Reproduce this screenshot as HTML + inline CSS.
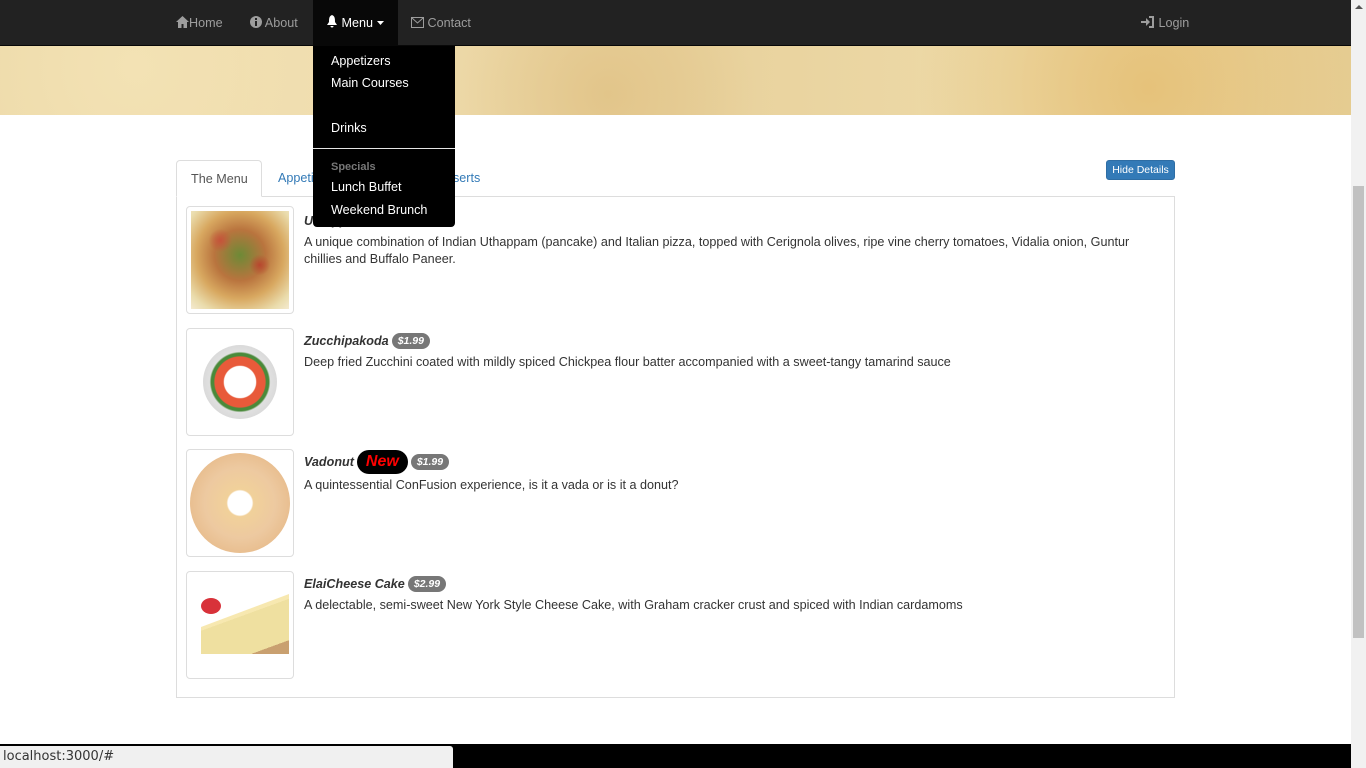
<!DOCTYPE html>
<html><head><meta charset="utf-8"><style>
*{box-sizing:border-box}
body{margin:0;width:1366px;height:768px;overflow:hidden;font-family:"Liberation Sans",Arial,sans-serif;font-size:13px;color:#333;background:#fff;position:relative}
.nav{position:absolute;left:0;top:0;width:1351px;height:46px;background:#222;border-bottom:1px solid #080808}
.nav a{position:absolute;top:1px;height:45px;line-height:45px;color:#9d9d9d;font-size:12.6px;text-decoration:none}
.jumbo{position:absolute;left:0;top:46px;width:1351px;height:69px;background:radial-gradient(circle at 10% 30%,#f3e2b4 0,transparent 25%),radial-gradient(circle at 45% 70%,#e2c58a 0,transparent 20%),radial-gradient(circle at 85% 60%,#e6c27a 0,transparent 20%),linear-gradient(90deg,#ead6a4,#efdcad,#e8d19c,#eddaa8,#e5cd94);}
.dd{position:absolute;left:313px;top:46px;width:142px;height:181px;background:#000;border-radius:0 0 4px 4px;color:#fff;font-size:12.6px}
.dd div{position:absolute;left:18px}
.scroll{position:absolute;left:1351px;top:0;width:15px;height:768px;background:#f1f1f1}
.thumb{position:absolute;left:1353px;top:186px;width:11px;height:452px;background:#c1c1c1}
.tabs{position:absolute;left:176px;top:196px;width:999px;height:502px;border:1px solid #ddd}
.tab{position:absolute;top:160px;height:37px;line-height:36px;font-size:12.6px}
.img{position:absolute;left:186px;width:108px;height:108px;border:1px solid #ddd;border-radius:4px;background:#fff;overflow:hidden}
.title{position:absolute;left:304px;font-weight:bold;font-style:italic;font-size:12.6px;color:#333}
.badge{display:inline-block;background:#777;color:#fff;font-size:10.5px;border-radius:10px;padding:2px 6px;margin-left:3px;vertical-align:1px}
.new{display:inline-block;background:#000;color:#f00;font-size:16px;border-radius:12px;padding:3px 9px;margin-left:3px}
.desc{position:absolute;left:304px;width:860px;line-height:17px;font-size:12.6px}
</style></head><body>
<div class="nav">
<a style="left:176px"><svg width="13" height="12" viewBox="0 0 13 12" style="vertical-align:-1px"><path d="M6.5 0L0 6h2v6h3.5V8h2v4H11V6h2z" fill="#9d9d9d"/></svg>Home</a>
<a style="left:250px"><svg width="12" height="12" style="vertical-align:-1px"><circle cx="6" cy="6" r="6" fill="#9d9d9d"/><rect x="5" y="5" width="2" height="5" fill="#222"/><rect x="5" y="2" width="2" height="2" fill="#222"/></svg> About</a>
<div style="position:absolute;left:313px;top:0;width:85px;height:45px;background:#080808"></div>
<a style="left:326px;color:#fff"><svg width="12" height="13" style="vertical-align:-1px"><path d="M6 0C3 1 3 4 3 7L1 10h10L9 7C9 4 9 1 6 0zM4.5 11h3a1.5 1.5 0 01-3 0z" fill="#fff"/></svg> Menu <svg width="7" height="4" style="vertical-align:2px"><path d="M0 0h7L3.5 4z" fill="#fff"/></svg></a>
<a style="left:411px"><svg width="13" height="11" style="vertical-align:-1px"><rect x="0.5" y="0.5" width="12" height="10" fill="none" stroke="#9d9d9d"/><path d="M1 1l5.5 5L12 1" fill="none" stroke="#9d9d9d"/></svg> Contact</a>
<a style="left:1141px"><svg width="14" height="12" style="vertical-align:-1px"><path d="M0 5h5V2l4 4-4 4V7H0z" fill="#9d9d9d"/><path d="M8 1h4v10H8" fill="none" stroke="#9d9d9d" stroke-width="2"/></svg> Login</a>
</div>
<div class="jumbo"></div>
<div class="tabs"></div>
<div class="tab" style="left:176px;width:86px;border:1px solid #ddd;border-bottom:1px solid #fff;border-radius:4px 4px 0 0;background:#fff;color:#555;padding-left:14px">The Menu</div>
<div class="tab" style="left:278px;color:#337ab7">Appetizers</div>
<div class="tab" style="left:453px;color:#337ab7">serts</div>
<div style="position:absolute;left:1106px;top:160px;width:69px;height:20px;background:#337ab7;border:1px solid #2e6da4;border-radius:3px;color:#fff;font-size:10.5px;line-height:18px;text-align:center">Hide Details</div>

<div class="img" style="top:206px"><div style="margin:4px;width:98px;height:98px;background:radial-gradient(circle at 30% 30%,#c5533a 0,transparent 12%),radial-gradient(circle at 70% 55%,#b8462e 0,transparent 12%),radial-gradient(circle at 50% 45%,#6d8a36 0,#b9743e 35%,#d8a860 60%,#eadcac 85%,#f4ead0 100%)"></div></div>
<div class="title" style="top:214px">Uthappizza</div>
<div class="desc" style="top:234px">A unique combination of Indian Uthappam (pancake) and Italian pizza, topped with Cerignola olives, ripe vine cherry tomatoes, Vidalia onion, Guntur chillies and Buffalo Paneer.</div>

<div class="img" style="top:328px"><div style="margin:16px auto;width:74px;height:74px;border-radius:50%;background:radial-gradient(circle,#fff 0 30%,#e85a3a 32% 48%,#4a8a3a 50% 55%,#e0e0e0 58%,#ccc 100%)"></div></div>
<div class="title" style="top:333px">Zucchipakoda<span class="badge">$1.99</span></div>
<div class="desc" style="top:354px">Deep fried Zucchini coated with mildly spiced Chickpea flour batter accompanied with a sweet-tangy tamarind sauce</div>

<div class="img" style="top:449px"><div style="margin:3px auto;width:100px;height:100px;border-radius:50%;background:radial-gradient(circle,#fff 0 17%,#f1d19a 19%,#edc9a0 50%,#e2b07a 100%)"></div></div>
<div class="title" style="top:450px">Vadonut<span class="new">New</span><span class="badge">$1.99</span></div>
<div class="desc" style="top:477px">A quintessential ConFusion experience, is it a vada or is it a donut?</div>

<div class="img" style="top:571px"><div style="position:absolute;left:14px;top:22px;width:88px;height:60px;background:linear-gradient(160deg,#f7e8b0 0 40%,#efe0a0 40% 85%,#c9a070 85%);clip-path:polygon(0 55%,100% 0,100% 100%,0 100%)"></div><div style="position:absolute;left:14px;top:26px;width:20px;height:16px;border-radius:50%;background:#d8323a"></div></div>
<div class="title" style="top:576px">ElaiCheese Cake<span class="badge">$2.99</span></div>
<div class="desc" style="top:597px">A delectable, semi-sweet New York Style Cheese Cake, with Graham cracker crust and spiced with Indian cardamoms</div>

<div class="dd">
<div style="top:8px">Appetizers</div>
<div style="top:30px">Main Courses</div>
<div style="top:75px">Drinks</div>
<div style="left:0;top:102px;width:142px;height:1px;background:#e5e5e5"></div>
<div style="top:115px;font-size:11px;color:#777;font-weight:bold">Specials</div>
<div style="top:134px">Lunch Buffet</div>
<div style="top:157px">Weekend Brunch</div>
</div>

<div class="scroll"></div><div class="thumb"></div>
<div style="position:absolute;left:1355px;top:5px;width:0;height:0;border:4px solid transparent;border-bottom:4px solid #555;border-top:0"></div>
<div style="position:absolute;left:0;top:744px;width:1351px;height:24px;background:#000"></div>
<div style="position:absolute;left:0;top:746px;width:453px;height:22px;background:#f0f0f0;border-radius:0 3px 0 0;font-family:'DejaVu Sans',sans-serif;font-size:13px;line-height:22px;padding-left:3px;color:#333">localhost:3000/#</div>
</body></html>
